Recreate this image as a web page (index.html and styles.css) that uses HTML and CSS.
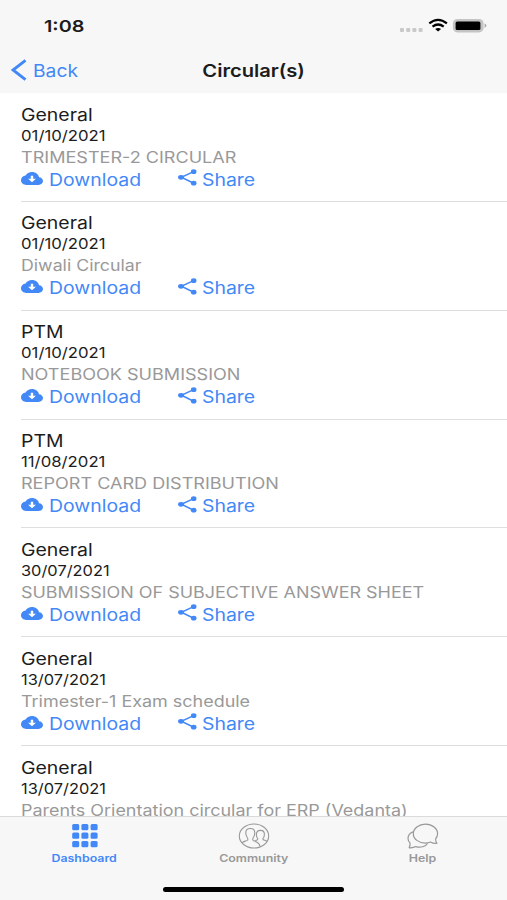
FILE: index.html
```html
<!DOCTYPE html>
<html lang="en">
<head>
<meta charset="utf-8">
<title>Circular(s)</title>
<link rel="stylesheet" href="styles.css">
</head>
<body>
<svg class="defs" aria-hidden="true">
  <symbol id="cloud" viewBox="0 0 22 13"><path d="M18 5.2C17.4 2.200 14.500 0 11 0 8.200 0 5.800 1.300 4.600 3.500 2 3.800 0 5.800 0 8.300 0 10.900 2.400 13 5.400 13H17.400C20 13 22 11.300 22 9.100 22 7 20.200 5.300 18 5.200Z" fill="currentColor"/><path d="M9.800 3.800h2.400v3h2.700L11 10.300 7.100 6.800h2.700z" fill="#fff"/></symbol>
  <symbol id="share" viewBox="0 0 19 17"><path d="M15.600 2.600 3.400 8.300 15.600 14.200" fill="none" stroke="currentColor" stroke-width="1.500"/><ellipse cx="15.700" cy="2.700" rx="2.800" ry="2.400" fill="currentColor"/><ellipse cx="3" cy="8.300" rx="2.900" ry="2.400" fill="currentColor"/><ellipse cx="15.700" cy="14.200" rx="2.800" ry="2.400" fill="currentColor"/></symbol>
</svg>
<div class="screen">
  <header class="header">
    <div class="status">
      <span class="clock">1:08</span>
      <svg class="status-icons" width="88" height="18" viewBox="0 0 88 18">
        <g fill="#c9c9c9"><rect x="1" y="11" width="4" height="4" rx="1"/><rect x="7.200" y="11" width="4" height="4" rx="1"/><rect x="13.400" y="11" width="4" height="4" rx="1"/><rect x="19.600" y="11" width="4" height="4" rx="1"/></g>
        <g fill="none" stroke="#000" stroke-width="2.200"><path d="M30.300 6.400Q39.100-.7 47.900 6.400"/><path d="M33.500 9.600Q39.100 5.400 44.700 9.600"/></g>
        <path d="M36.100 11.900Q39.100 10 42.100 11.900L39.100 14.600Z"/>
        <rect x="53.900" y="2" width="30.700" height="13.400" rx="4.500" fill="#c4c4c4"/>
        <rect x="56.600" y="4.500" width="24.800" height="8.500" rx="1.500"/>
        <path d="M85.600 6.600v4.200q1.800-.5 1.800-2.100T85.600 6.600" fill="#aaa"/>
      </svg>
    </div>
    <div class="nav">
      <a class="back"><svg width="16" height="22" viewBox="0 0 16 22"><path d="M14.500 1.300 2 11 14.500 20.700" fill="none" stroke="currentColor" stroke-width="2.900"/></svg><span>Back</span></a>
      <h1>Circular(s)</h1>
    </div>
  </header>
  <main class="list">
    <article class="item"><h2>General</h2><p class="date date-ones">01/10/2021</p><p class="desc">TRIMESTER-2 CIRCULAR</p><div class="actions"><a class="download"><svg><use href="#cloud"/></svg><span>Download</span></a><a class="share"><svg><use href="#share"/></svg><span>Share</span></a></div></article>
    <article class="item"><h2>General</h2><p class="date date-ones">01/10/2021</p><p class="desc desc-narrow">Diwali Circular</p><div class="actions"><a class="download"><svg><use href="#cloud"/></svg><span>Download</span></a><a class="share"><svg><use href="#share"/></svg><span>Share</span></a></div></article>
    <article class="item"><h2 class="caps">PTM</h2><p class="date date-ones">01/10/2021</p><p class="desc">NOTEBOOK SUBMISSION</p><div class="actions"><a class="download"><svg><use href="#cloud"/></svg><span>Download</span></a><a class="share"><svg><use href="#share"/></svg><span>Share</span></a></div></article>
    <article class="item"><h2 class="caps">PTM</h2><p class="date date-ones">11/08/2021</p><p class="desc">REPORT CARD DISTRIBUTION</p><div class="actions"><a class="download"><svg><use href="#cloud"/></svg><span>Download</span></a><a class="share"><svg><use href="#share"/></svg><span>Share</span></a></div></article>
    <article class="item"><h2>General</h2><p class="date">30/07/2021</p><p class="desc desc-long">SUBMISSION OF SUBJECTIVE ANSWER SHEET</p><div class="actions"><a class="download"><svg><use href="#cloud"/></svg><span>Download</span></a><a class="share"><svg><use href="#share"/></svg><span>Share</span></a></div></article>
    <article class="item"><h2>General</h2><p class="date">13/07/2021</p><p class="desc desc-long">Trimester-1 Exam schedule</p><div class="actions"><a class="download"><svg><use href="#cloud"/></svg><span>Download</span></a><a class="share"><svg><use href="#share"/></svg><span>Share</span></a></div></article>
    <article class="item"><h2>General</h2><p class="date">13/07/2021</p><p class="desc desc-long">Parents Orientation circular for ERP (Vedanta)</p></article>
  </main>
  <footer class="footer">
    <nav class="tabs">
      <a class="tab active"><svg width="32" height="28" viewBox="0 0 32 28" fill="currentColor"><g id="dots"><rect x="3.200" y="2" width="7" height="6.200" rx="1.500"/><rect x="12.400" y="2" width="7" height="6.200" rx="1.500"/><rect x="21.600" y="2" width="7" height="6.200" rx="1.500"/></g><use href="#dots" y="8.600"/><use href="#dots" y="17.100"/></svg><span>Dashboard</span></a>
      <a class="tab"><svg width="32" height="28" viewBox="0 0 32 28" fill="none" stroke="currentColor" stroke-width="1.100"><ellipse cx="16" cy="14" rx="14.700" ry="12"/><path d="M4.200 20.700C5.500 19.300 8 19.200 9.300 18.400 10.300 17.700 9.800 16.300 9.100 15.300 8.200 13.900 7.700 12.300 7.800 10.400 7.900 7.900 9.800 6.500 12.300 6.500S16.700 7.900 16.800 10.400C16.900 12.300 16.400 13.900 15.500 15.300 14.800 16.300 14.300 17.700 15.300 18.400 17.400 19.600 21.300 20 22 24.300M17.300 18.600C18.600 18.200 20.100 18 19.800 16.700 18.800 15.600 18.300 14.300 18.400 12.300 18.500 10.100 20.200 8.400 22.500 8.400S26.400 10.100 26.400 12.300C26.400 14.300 25.900 15.600 24.900 16.700 24.600 18.500 27.400 18 28.900 19.400"/></svg><span>Community</span></a>
      <a class="tab"><svg width="32" height="28" viewBox="0 0 32 28" fill="none" stroke="currentColor" stroke-width="1.200" stroke-linejoin="round"><path d="M29.900 21.400C26.800 21.600 24.900 20.900 23.500 20 22 20.700 20.300 21.100 18.500 21.100 11.700 21.100 6.300 17 6.300 11.700S11.700 2.100 18.500 2.100 30.600 6.400 30.600 11.700C30.600 14 29.600 15.600 28.600 16.900 28.500 18.500 28.800 20 29.900 21.400Z"/><path d="M6.500 9.600C3.200 10.800 1 13.500 1 16.500 1 18.700 2 20 3.100 21.200 3.200 22.800 2.700 24.600 2.200 25.800 5 26 7.200 25.600 8.800 24.600 13.500 26.100 18.800 24.600 20.600 21.200"/></svg><span>Help</span></a>
    </nav>
    <div class="home-bar"></div>
  </footer>
</div>
</body>
</html>
```
FILE: styles.css
```css
* { box-sizing: border-box; }
body { margin: 0; background: #fff; color: #1c1c1c; font-family: Inter, "Liberation Sans", sans-serif; }
h1, h2, p { margin: 0; font-weight: 400; white-space: nowrap; }
.defs { position: absolute; width: 0; height: 0; }
.screen { width: 507px; height: 900px; display: flex; flex-direction: column; overflow: hidden; }

.header { flex: none; height: 93px; background: #f7f7f7; }
.status { height: 48px; padding: 17px 20px 0 44px; display: flex; justify-content: space-between; align-items: flex-start; }
.clock { font-size: 16.5px; line-height: 18px; font-weight: 600; transform: scaleX(1.2); transform-origin: 0 50%; }
.status-icons { display: block; }
.nav { height: 44px; display: grid; grid-template-columns: 1fr auto 1fr; align-items: center; }
.back { display: flex; align-items: center; gap: 6px; padding-left: 11px; color: #4388f7; font-size: 17.5px; }
.back span { transform: scaleX(1.1); transform-origin: 0 50%; }
.nav h1 { font-size: 17.5px; font-weight: 600; transform: scaleX(1.15); }

.list { flex: 1; min-height: 0; overflow: hidden; padding-left: 21px; }
.item { height: 108.85px; padding-top: 11.5px; border-bottom: 1px solid #dedede; }
.item h2, .date, .desc, .actions span { transform-origin: 0 50%; }
.item h2 { font-size: 17px; line-height: 21px; transform: scaleX(1.145); }
.item h2.caps { transform: scaleX(1.14); }
.date { font-size: 14.5px; line-height: 19px; transform: scaleX(1.13); }
.date-ones { transform: scaleX(1.155); }
.desc { font-size: 15.5px; line-height: 25px; color: #999; transform: scaleX(1.165); }
.desc-narrow { transform: scaleX(1.145); }
.desc-long { transform: scaleX(1.158); }
.actions { display: flex; height: 21px; color: #4388f7; font-size: 17px; line-height: 21px; }
.actions a { display: flex; align-items: center; }
.download { width: 157px; gap: 6px; }
.share { gap: 5px; }
.download svg { width: 22px; height: 13px; margin-bottom: 4px; }
.share svg { width: 19px; height: 17px; margin-bottom: 5px; }
.actions span { transform: scaleX(1.143); }

.footer { flex: none; height: 84px; background: #f7f7f7; border-top: 1px solid #dadada; display: flex; flex-direction: column; align-items: center; }
.tabs { width: 100%; height: 70px; display: grid; grid-template-columns: repeat(3, 1fr); }
.tab { display: flex; flex-direction: column; align-items: center; padding-top: 5px; color: #999; font-size: 10.3px; line-height: 14px; font-weight: 600; }
.tab span { margin-top: 1px; transform: scaleX(1.2); }
.tab.active { color: #4388f7; }
.home-bar { width: 181px; height: 5px; border-radius: 3px; background: #000; }
```
